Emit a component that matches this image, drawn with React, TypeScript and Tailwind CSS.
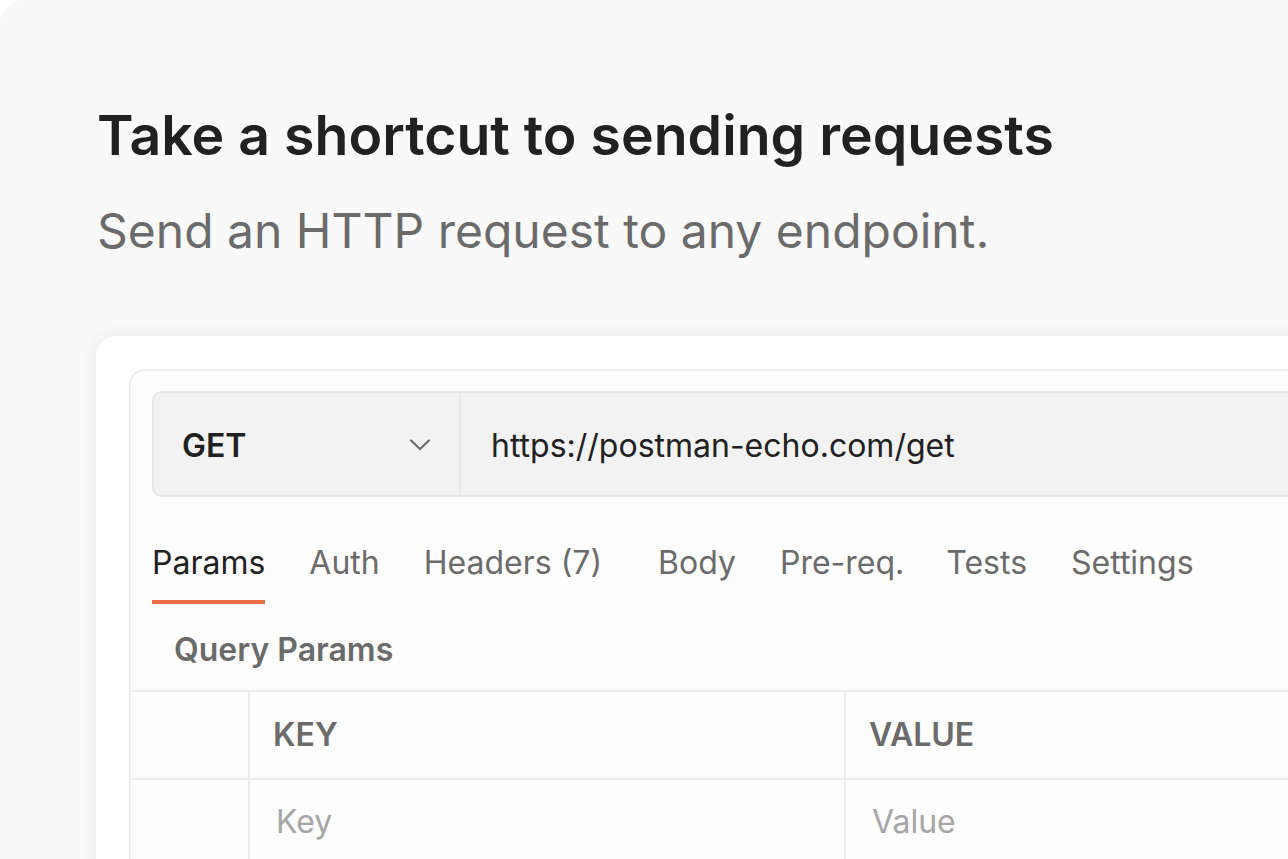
import React from "react";

const tabs = ["Params", "Auth", "Headers (7)", "Body", "Pre-req.", "Tests", "Settings"];

export default function App() {
  return (
    <div className="w-[1288px] h-[859px] bg-white overflow-hidden" style={{ fontFamily: "Inter, 'Noto Sans', sans-serif" }}>
      <div className="h-full bg-[#f9f9f9] rounded-tl-[24px] overflow-hidden pl-[96px] pt-[103px]">
        <h1 className="text-[55.4px] leading-[64px] font-semibold text-[#212121] pl-[1px]">
          Take a shortcut to sending requests
        </h1>
        <p className="mt-[36px] text-[48px] leading-[56px] text-[#6b6b6b] pl-[1px]">
          Send an HTTP request to any endpoint.
        </p>
        <div className="mt-[77px] w-[1260px] h-[600px] bg-white rounded-tl-[20px] shadow-[0_0_18px_rgba(0,0,0,0.07)] pl-[33px] pt-[33px]">
          <div className="h-full bg-[#fdfdfd] border-l-2 border-t-2 border-[#ececec] rounded-tl-[16px] pt-[20px]">
            <div className="ml-[21px] h-[106px] flex bg-[#f2f2f2] border-2 border-r-0 border-[#e6e6e6] rounded-l-[10px]">
              <div className="w-[307px] flex items-center justify-between pl-[28px] pr-[28px] pt-[4px] border-r-2 border-[#e6e6e6]">
                <span className="text-[32px] font-semibold text-[#212121]">GET</span>
                <svg width="22" height="14" viewBox="0 0 22 14" fill="none" className="-mt-[2px]">
                  <path d="M2 2.5 L11 11 L20 2.5" stroke="#6b6b6b" strokeWidth="2.2" strokeLinecap="round" strokeLinejoin="round" />
                </svg>
              </div>
              <div className="flex items-center pl-[30px] pt-[4px] text-[32px] text-[#212121]">
                https://postman-echo.com/get
              </div>
            </div>
            <div className="mt-[46px] ml-[21px] flex">
              {tabs.map((t, i) => (
                <div
                  key={t}
                  className={
                    i === 0
                      ? "text-[32px] leading-[40px] pb-[17px] border-b-4 border-[#eb6f45] text-[#212121] mr-[44px]"
                      : i === 2
                      ? "text-[32px] leading-[40px] pb-[17px] border-b-4 border-transparent text-[#6b6b6b] mr-[56px]"
                      : i === 4
                      ? "text-[32px] leading-[40px] pb-[17px] border-b-4 border-transparent text-[#6b6b6b] mr-[42px]"
                      : "text-[32px] leading-[40px] pb-[17px] border-b-4 border-transparent text-[#6b6b6b] mr-[44px]"
                  }
                >
                  {t}
                </div>
              ))}
            </div>
            <div className="mt-[28px] pl-[43px] text-[32px] leading-[36px] font-semibold text-[#6b6b6b]">Query Params</div>
            <div className="mt-[22px] border-t-2 border-[#ececec]">
              <div className="flex h-[88px] border-b-2 border-[#ececec]">
                <div className="w-[119px] border-r-2 border-[#ececec]"></div>
                <div className="w-[596px] border-r-2 border-[#ececec] flex items-center pl-[23px] text-[32px] font-semibold text-[#6b6b6b]">KEY</div>
                <div className="flex items-center pl-[23px] text-[32px] font-semibold text-[#6b6b6b]">VALUE</div>
              </div>
              <div className="flex h-[100px]">
                <div className="w-[119px] border-r-2 border-[#ececec]"></div>
                <div className="w-[596px] border-r-2 border-[#ececec] pl-[26px] pt-[22px] text-[32px] leading-[40px] text-[#a6a6a6]">Key</div>
                <div className="pl-[26px] pt-[22px] text-[32px] leading-[40px] text-[#a6a6a6]">Value</div>
              </div>
            </div>
          </div>
        </div>
      </div>
    </div>
  );
}
